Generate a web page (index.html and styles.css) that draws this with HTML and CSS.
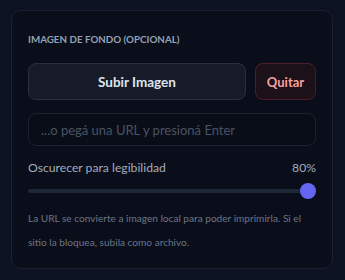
FILE: index.html
```html
<!DOCTYPE html>
<html lang="es">
<head>
  <meta charset="UTF-8">
  <title>Imagen de fondo</title>
  <link rel="stylesheet" href="styles.css">
</head>
<body>
  <div class="card">
    <h3 class="card_title">Imagen de fondo (opcional)</h3>
    <div class="btn_row">
      <button class="btn btn_upload">Subir Imagen</button>
      <button class="btn btn_remove">Quitar</button>
    </div>
    <input class="url_input" type="text" placeholder="...o pegá una URL y presioná Enter">
    <div class="range_head">
      <span>Oscurecer para legibilidad</span>
      <span>80%</span>
    </div>
    <div class="range_track">
      <div class="range_thumb"></div>
    </div>
    <p class="hint">La URL se convierte a imagen local para poder imprimirla. Si el sitio la bloquea, subila como archivo.</p>
  </div>
</body>
</html>
```

FILE: styles.css
```css
* { box-sizing: border-box; }
body { margin: 0; padding: 10px 12px 0 11px; background: #0c1221; font-family: Lato, "Noto Sans", sans-serif; }
.card { background: #0a0e1a; border: 1px solid #1a2030; border-radius: 10px; padding: 20px 16px 14px; }
.card_title { margin: 0 0 16px; font-size: 9.8px; line-height: 16px; font-weight: 700; text-transform: uppercase; color: #94a0b4; }
.btn_row { display: flex; gap: 9px; }
.btn { height: 37px; border-radius: 8px; font-family: inherit; font-size: 13.5px; font-weight: 700; cursor: pointer; }
.btn_upload { flex: 1; background: #161b27; border: 1px solid #2a303d; color: #dfe5ee; }
.btn_remove { width: 61px; background: #1c1019; border: 1px solid #4f1d27; color: #f9a0a0; font-size: 13px; }
.url_input { display: block; width: 100%; height: 33px; margin-top: 13px; padding: 0 12px; background: #090d17; border: 1px solid #1c2230; border-radius: 8px; font-family: inherit; font-size: 13px; color: #cbd5e1; }
.url_input::placeholder { color: #4a5364; }
.range_head { display: flex; justify-content: space-between; margin-top: 13px; font-size: 12.2px; line-height: 18px; color: #a3acba; }
.range_track { position: relative; height: 4px; margin: 12px 0 0; background: #1e2736; border-radius: 2px; }
.range_thumb { position: absolute; right: 0; top: -6px; width: 16px; height: 16px; border-radius: 50%; background: #6466f1; }
.hint { margin: 13px 0 0; font-size: 10.1px; line-height: 24px; color: #6b7587; }
```
